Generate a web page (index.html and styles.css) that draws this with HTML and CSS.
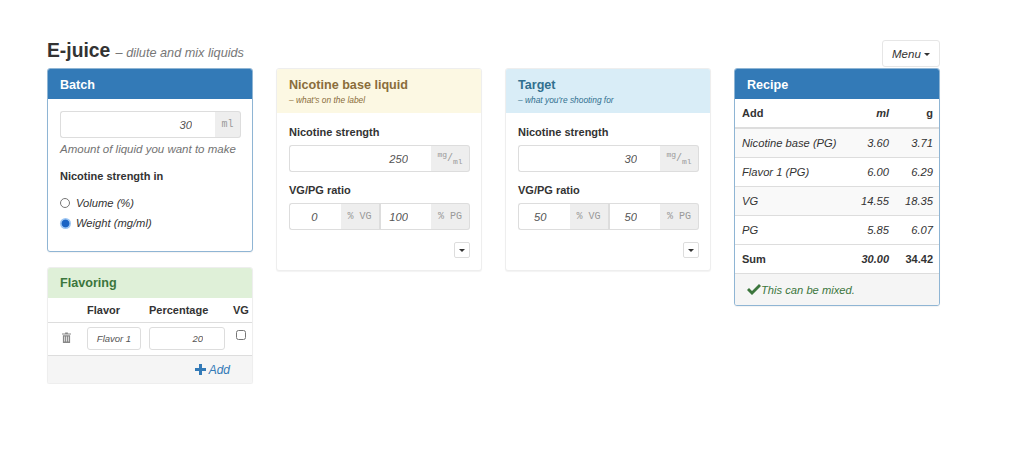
FILE: index.html
```html
<!DOCTYPE html>
<html lang="en">
<head>
  <meta charset="UTF-8">
  <title>E-juice - dilute and mix liquids</title>
  <link rel="stylesheet" href="styles.css">
</head>
<body>

<div class="container">
  <header class="page-header">
    <h1>E-juice <small>– dilute and mix liquids</small></h1>
    <button class="menu-btn">Menu <span class="caret"></span></button>
  </header>

  <div class="columns">
    <div class="column">
      <section class="panel panel-primary">
        <h2 class="panel-heading">Batch</h2>
        <div class="panel-body batch-body">
          <div class="input-group">
            <input type="text" value="30">
            <span class="addon">ml</span>
          </div>
          <p class="help">Amount of liquid you want to make</p>
          <p class="field-label strength-in">Nicotine strength in</p>
          <label class="radio"><input type="radio" name="unit"> Volume (%)</label>
          <label class="radio"><input type="radio" name="unit" checked> Weight (mg/ml)</label>
        </div>
      </section>

      <section class="panel panel-success">
        <h2 class="panel-heading">Flavoring</h2>
        <table class="flavor-table">
          <thead>
            <tr>
              <th></th>
              <th>Flavor</th>
              <th>Percentage</th>
              <th>VG</th>
            </tr>
          </thead>
          <tbody>
            <tr>
              <td class="trash">
                <svg width="9" height="11" viewBox="0 0 10 12"><path d="M3.5 1.5V.5h3v1H10v1.2H0V1.500zM1 3.500h8V12H1zM2.600 5v5.500h.8V5zM4.600 5v5.500h.8V5zM6.600 5v5.500h.8V5z" fill="#888" fill-rule="evenodd"/></svg>
              </td>
              <td><input class="flavor-name" type="text" value="Flavor 1"></td>
              <td><input class="flavor-pct" type="text" value="20"></td>
              <td class="vg-cell"><input type="checkbox"></td>
            </tr>
          </tbody>
        </table>
        <div class="panel-footer add-row">
          <svg width="11" height="11" viewBox="0 0 11 11"><path d="M4 0h3v4h4v3H7v4H4V7H0V4h4z" fill="#337ab7"/></svg>
          <a href="#">Add</a>
        </div>
      </section>
    </div>

    <div class="column">
      <section class="panel panel-warning">
        <div class="panel-heading tall">
          <h2>Nicotine base liquid</h2>
          <small>– what's on the label</small>
        </div>
        <div class="panel-body liquid-body">
          <p class="field-label">Nicotine strength</p>
          <div class="input-group">
            <input type="text" value="250">
            <span class="addon"><span><sup>mg</sup>/<sub>ml</sub></span></span>
          </div>
          <p class="field-label ratio-label">VG/PG ratio</p>
          <div class="input-group">
            <input class="ratio" type="text" value="0">
            <span class="addon">% VG</span>
            <input class="ratio" type="text" value="100">
            <span class="addon">% PG</span>
          </div>
          <div class="more"><button class="more-btn"><span class="caret"></span></button></div>
        </div>
      </section>
    </div>

    <div class="column">
      <section class="panel panel-info">
        <div class="panel-heading tall">
          <h2>Target</h2>
          <small>– what you're shooting for</small>
        </div>
        <div class="panel-body liquid-body">
          <p class="field-label">Nicotine strength</p>
          <div class="input-group">
            <input type="text" value="30">
            <span class="addon"><span><sup>mg</sup>/<sub>ml</sub></span></span>
          </div>
          <p class="field-label ratio-label">VG/PG ratio</p>
          <div class="input-group">
            <input class="ratio" type="text" value="50">
            <span class="addon">% VG</span>
            <input class="ratio" type="text" value="50">
            <span class="addon">% PG</span>
          </div>
          <div class="more"><button class="more-btn"><span class="caret"></span></button></div>
        </div>
      </section>
    </div>

    <div class="column">
      <section class="panel panel-primary">
        <h2 class="panel-heading">Recipe</h2>
        <table class="recipe-table">
          <thead>
            <tr><th>Add</th><th class="num"><em>ml</em></th><th class="num g-col">g</th></tr>
          </thead>
          <tbody>
            <tr><td>Nicotine base (PG)</td><td class="num">3.60</td><td class="num">3.71</td></tr>
            <tr><td>Flavor 1 (PG)</td><td class="num">6.00</td><td class="num">6.29</td></tr>
            <tr><td>VG</td><td class="num">14.55</td><td class="num">18.35</td></tr>
            <tr><td>PG</td><td class="num">5.85</td><td class="num">6.07</td></tr>
            <tr class="sum"><td>Sum</td><td class="num"><em>30.00</em></td><td class="num">34.42</td></tr>
          </tbody>
        </table>
        <div class="panel-footer status">
          <svg width="14" height="11" viewBox="0 0 14 11"><path d="M0 6l2-2 3 3 7-7 2 2-9 9z" fill="#3c763d"/></svg>
          This can be mixed.
        </div>
      </section>
    </div>
  </div>
</div>

</body>
</html>
```

FILE: styles.css
```css
* {
  box-sizing: border-box;
}
body {
  font-family: "Liberation Sans", Arial, sans-serif;
  font-size: 11.2px;
  color: #333;
  margin: 0;
  background-color: #fff;
}
input, button {
  font-family: inherit;
}
.container {
  width: 893px;
  margin-left: 47px;
  padding-top: 40px;
}
.page-header {
  display: flex;
  justify-content: space-between;
  align-items: flex-end;
  height: 28px;
}
h1 {
  font-size: 19.3px;
  line-height: 22px;
  margin: 0 0 4px;
}
h1 small {
  font-size: 12.7px;
  font-weight: normal;
  font-style: italic;
  color: #777;
}
.menu-btn {
  width: 58px;
  height: 27px;
  padding: 0;
  font-size: 11.5px;
  font-style: italic;
  color: #333;
  background-color: #fff;
  border: 1px solid #e6e6e6;
  border-radius: 3px;
  margin-bottom: 1px;
}
.caret {
  display: inline-block;
  width: 0;
  height: 0;
  vertical-align: middle;
  border-top: 3px solid #333;
  border-left: 3px solid transparent;
  border-right: 3px solid transparent;
}
.columns {
  display: flex;
  gap: 23px;
  align-items: flex-start;
}
.column {
  width: 206px;
  display: flex;
  flex-direction: column;
  gap: 15px;
}
.panel {
  background-color: #fff;
  border: 1px solid #eee;
  border-radius: 3px;
  overflow: hidden;
  box-shadow: 0 1px 1px rgba(0,0,0,.05);
}
.panel-heading {
  margin: 0;
  height: 30px;
  padding: 0 12px;
  font-size: 12.6px;
  line-height: 32px;
  font-weight: bold;
}
.panel-heading.tall {
  height: 44px;
  padding-top: 8px;
  line-height: normal;
}
.panel-heading h2 {
  margin: 0;
  font-size: 12.6px;
  line-height: 16px;
}
.panel-heading small {
  display: block;
  font-size: 8.4px;
  font-weight: normal;
  font-style: italic;
  margin-top: 2px;
  line-height: 10px;
}
.panel-primary {
  border-color: #8fb5d4;
}
.panel-primary .panel-heading {
  background-color: #337ab7;
  color: #fff;
}
.panel-success .panel-heading {
  background-color: #dff0d8;
  color: #3c763d;
  line-height: 30px;
}
.panel-warning .panel-heading {
  background-color: #fcf8e3;
  color: #8a6d3b;
}
.panel-info .panel-heading {
  background-color: #d9edf7;
  color: #31708f;
}
.panel-footer {
  background-color: #f5f5f5;
  border-top: 1px solid #ddd;
}
.panel-body {
  padding: 12px 11px 12px 12px;
}
.input-group {
  display: flex;
  height: 27px;
}
.input-group input {
  flex: 1;
  min-width: 0;
  height: 27px;
  padding: 0 23px 0 6px;
  font-size: 11.2px;
  font-style: italic;
  color: #555;
  text-align: right;
  background-color: #fff;
  border: 1px solid #ddd;
  border-right: none;
  border-radius: 3px 0 0 3px;
}
.input-group input.ratio + .addon + input.ratio {
  border-radius: 0;
}
.addon {
  flex: none;
  display: flex;
  align-items: center;
  justify-content: center;
  width: 39px;
  font-family: "Liberation Mono", monospace;
  font-size: 10px;
  color: #999;
  background-color: #eee;
  border: 1px solid #ddd;
  border-left: none;
}
.addon:last-child {
  border-radius: 0 3px 3px 0;
}
.addon sup, .addon sub {
  font-size: 8px;
  line-height: 0;
}
.batch-body {
  height: 152px;
}
.batch-body .addon {
  width: 26px;
}
.help {
  margin: 3px 0 0;
  font-size: 11.5px;
  font-style: italic;
  color: #737373;
  line-height: 16px;
}
.field-label {
  margin: 0;
  font-size: 11px;
  font-weight: bold;
  line-height: 14px;
}
.strength-in {
  margin-top: 12px;
}
.radio {
  display: flex;
  align-items: center;
  gap: 6px;
  height: 20px;
  font-size: 11.2px;
  font-style: italic;
}
.strength-in + .radio {
  margin-top: 10px;
}
.radio input {
  width: 10px;
  height: 10px;
  margin: 0;
}
.radio input:checked {
  appearance: none;
  width: 11px;
  height: 11px;
  margin-right: -1px;
  border-radius: 50%;
  background: radial-gradient(circle, #1b64c4 45%, #9cc5f2 55%);
}
.flavor-table, .recipe-table {
  width: 100%;
  border-collapse: collapse;
}
.flavor-table {
  table-layout: fixed;
}
.flavor-table th {
  height: 24px;
  text-align: left;
  font-size: 11px;
  border-bottom: 1px solid #ddd;
  padding: 0;
}
.flavor-table td {
  height: 33px;
  padding: 0;
  text-align: left;
}
.flavor-table th:nth-child(1) {
  width: 39px;
}
.flavor-table th:nth-child(2) {
  width: 62px;
}
.flavor-table th:nth-child(3) {
  width: 84px;
}
.flavor-table input[type=text] {
  display: block;
  height: 23px;
  font-size: 9.5px;
  font-style: italic;
  color: #555;
  background-color: #fff;
  border: 1px solid #ddd;
  border-radius: 3px;
  padding: 0 6px;
}
.flavor-name {
  width: 54px;
  text-align: center;
}
.flavor-pct {
  width: 76px;
  text-align: right;
  padding-right: 21px !important;
}
.vg-cell {
  padding-left: 3px !important;
}
.vg-cell input {
  display: block;
  width: 10px;
  height: 10px;
  margin: 0 0 7px;
}
.trash {
  padding-left: 14px !important;
}
.add-row {
  height: 28px;
  display: flex;
  align-items: center;
  justify-content: flex-end;
  gap: 3px;
  padding-right: 22px;
  font-size: 12px;
  font-style: italic;
}
.add-row a {
  color: #337ab7;
  text-decoration: none;
}
.liquid-body {
  height: 157px;
}
.liquid-body .field-label {
  margin-bottom: 6px;
}
.ratio-label {
  margin-top: 11px;
}
.more {
  display: flex;
  justify-content: flex-end;
  margin-top: 12px;
}
.more-btn {
  width: 16px;
  height: 16px;
  padding: 0;
  display: flex;
  align-items: center;
  justify-content: center;
  background-color: #fff;
  border: 1px solid #ddd;
  border-radius: 2px;
}
.recipe-table th, .recipe-table td {
  height: 29px;
  padding: 0 6px 0 7px;
  text-align: left;
  border-top: 1px solid #ddd;
  font-style: italic;
}
.recipe-table th {
  font-size: 11px;
  font-style: normal;
  border-top: none;
  border-bottom: 2px solid #ddd;
}
.recipe-table th.num, .recipe-table td.num {
  text-align: right;
}
.recipe-table th.g-col {
  width: 44px;
}
.recipe-table tbody tr:nth-child(odd) {
  background-color: #f9f9f9;
}
.recipe-table tbody tr.sum {
  background-color: #fff;
}
.recipe-table tr.sum td {
  font-size: 11px;
  font-weight: bold;
  font-style: normal;
}
.status {
  height: 32px;
  display: flex;
  align-items: center;
  gap: 0;
  padding-left: 12px;
  font-style: italic;
  color: #3c763d;
}
```
